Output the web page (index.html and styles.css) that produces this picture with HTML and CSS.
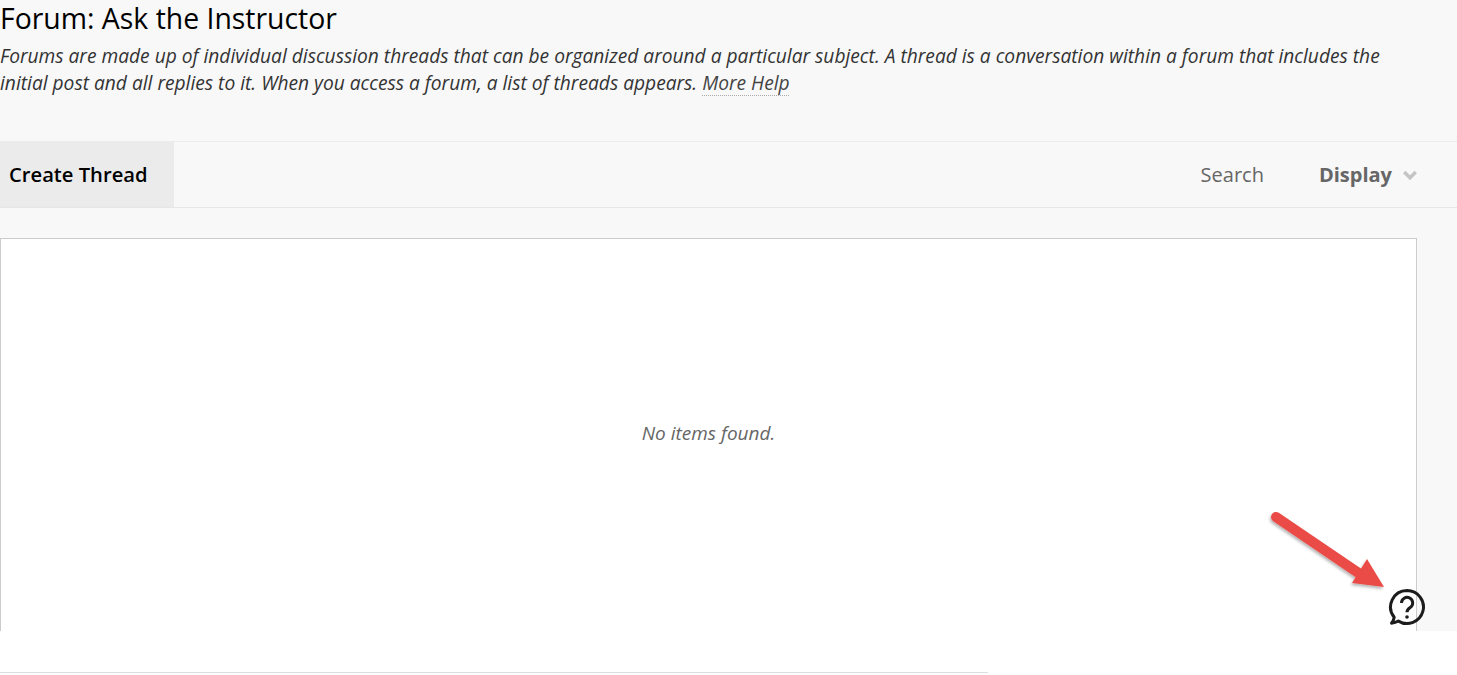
FILE: index.html
```html
<!DOCTYPE html>
<html lang="en">
<head>
    <meta charset="UTF-8">
    <title>Forum: Ask the Instructor</title>
    <link rel="stylesheet" href="styles.css">
</head>
<body>
    <div class="page">
        <div class="page-header">
            <h1>Forum: Ask the Instructor</h1>
            <p class="instructions">Forums are made up of individual discussion threads that can be organized around a particular subject. A thread is a conversation within a forum that includes the initial post and all replies to it. When you access a forum, a list of threads appears. <a href="#">More Help</a></p>
        </div>
        <div class="toolbar">
            <a class="create-btn" href="#">Create Thread</a>
            <div class="toolbar-right">
                <a class="search-link" href="#">Search</a>
                <a class="display-link" href="#">Display
                    <svg width="14" height="10" viewBox="0 0 14 10"><path d="M1.200 2L7 7.800 12.800 2" fill="none" stroke="#c4c4c4" stroke-width="3.400"/></svg>
                </a>
            </div>
        </div>
        <div class="list-box">
            <p class="empty">No items found.</p>
        </div>
    </div>
    <div class="footer-rule"></div>

    <svg class="arrow" width="130" height="90" viewBox="0 0 130 90">
        <defs>
            <filter id="arrow-shadow" x="-10%" y="-10%" width="120%" height="130%">
                <feDropShadow dx="-1" dy="2" stdDeviation="1.500" flood-color="#000" flood-opacity="0.3"/>
            </filter>
        </defs>
        <g filter="url(#arrow-shadow)" fill="#ea4c46">
            <path d="M8 9L92 66" stroke="#ea4c46" stroke-width="10" stroke-linecap="round"/>
            <path d="M99 51L116 79 84 75z"/>
        </g>
    </svg>

    <svg class="help-icon" width="38" height="38" viewBox="0 0 38 38">
        <path d="M19 2.500a16.500 16.500 0 1 1-8.600 30.600C8.500 34.300 6.500 35 3.500 35.200 5.300 33 6 31 6.200 29.300A16.500 16.500 0 0 1 19 2.500z" fill="none" stroke="#1c1c1c" stroke-width="3" stroke-linejoin="round"/>
        <path d="M13.500 15a5.600 5.600 0 1 1 8.700 4.600c-2 1.400-3.200 2.500-3.200 4.600" fill="none" stroke="#1c1c1c" stroke-width="3"/>
        <circle cx="19" cy="29" r="1.800" fill="#1c1c1c"/>
    </svg>
</body>
</html>
```

FILE: styles.css
```css
body {
    margin: 0;
    background-color: white;
    font-family: "Open Sans", Arial, sans-serif;
    color: #333;
    height: 675px;
    overflow: hidden;
    position: relative;
}

.page {
    background-color: #f8f8f8;
    height: 631px;
    overflow: hidden;
}

.page-header {
    height: 141px;
}

h1 {
    margin: 0;
    font-size: 28.4px;
    font-weight: 400;
    line-height: 37px;
    color: #000;
}

.instructions {
    margin: 5px 0 0;
    max-width: 1400px;
    font-size: 19.18px;
    font-style: italic;
    line-height: 27px;
    color: #333;
}

.instructions a {
    color: #444;
    text-decoration: underline dotted #aaa 1px;
    text-underline-offset: 5px;
}

.toolbar {
    display: flex;
    justify-content: space-between;
    align-items: stretch;
    height: 65px;
    border-top: 1px solid #ececec;
    border-bottom: 1px solid #e6e6e6;
}

.create-btn {
    display: flex;
    align-items: center;
    width: 165px;
    padding: 0 0 2px 9px;
    background-color: #ebebeb;
    color: #000;
    font-size: 20.2px;
    font-weight: 600;
    text-decoration: none;
}

.toolbar-right {
    display: flex;
    align-items: center;
    gap: 55px;
    padding-right: 40px;
    font-size: 20px;
}

.search-link {
    color: #666;
    text-decoration: none;
}

.display-link {
    display: flex;
    align-items: center;
    gap: 11px;
    color: #666;
    font-weight: 700;
    text-decoration: none;
}

.list-box {
    display: flex;
    align-items: center;
    justify-content: center;
    box-sizing: border-box;
    width: 1417px;
    height: 410px;
    padding-bottom: 20px;
    margin-top: 30px;
    background-color: white;
    border: 1px solid #ccc;
}

.empty {
    margin: 0;
    font-size: 19px;
    font-style: italic;
    color: #666;
}

.footer-rule {
    width: 988px;
    margin-top: 41px;
    border-top: 1px solid #ddd;
}

.arrow {
    position: absolute;
    left: 1268px;
    top: 508px;
}

.help-icon {
    position: absolute;
    left: 1388px;
    top: 588px;
}
```
